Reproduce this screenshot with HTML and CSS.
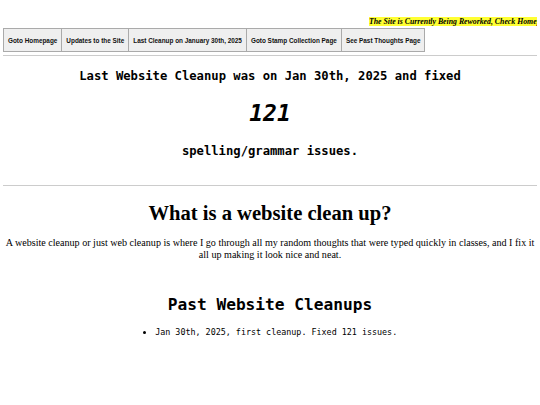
FILE: index.html
```html
<!DOCTYPE html>
<html>
<head>
<meta charset="utf-8">
<link rel="stylesheet" href="styles.css">
</head>
<body>
<div class="notice"><span class="notice-text">The Site is Currently Being Reworked, Check Homepage for Updates</span></div>
<nav class="nav">
  <button class="nav-btn">Goto Homepage</button>
  <button class="nav-btn">Updates to the Site</button>
  <button class="nav-btn">Last Cleanup on January 30th, 2025</button>
  <button class="nav-btn">Goto Stamp Collection Page</button>
  <button class="nav-btn">See Past Thoughts Page</button>
</nav>
<hr class="rule rule-top">
<section class="summary">
  <p class="mono-line">Last Website Cleanup was on Jan 30th, 2025 and fixed</p>
  <p class="count">121</p>
  <p class="mono-line">spelling/grammar issues.</p>
</section>
<hr class="rule">
<h1 class="title">What is a website clean up?</h1>
<p class="desc">A website cleanup or just web cleanup is where I go through all my random thoughts that were typed quickly in classes, and I fix it all up making it look nice and neat.</p>
<h2 class="past-title">Past Website Cleanups</h2>
<ul class="past-list">
  <li>Jan 30th, 2025, first cleanup. Fixed 121 issues.</li>
</ul>
</body>
</html>
```
FILE: styles.css
```css
html, body {
  margin: 0;
  padding: 0;
  background: #fff;
  color: #000;
}
body {
  padding: 0 3px;
  font-family: "Liberation Serif", serif;
}
.notice {
  height: 28px;
  overflow: hidden;
  white-space: nowrap;
  padding-left: 366px;
  box-sizing: border-box;
  padding-top: 10px;
}
.notice-text {
  font-family: "Liberation Serif", serif;
  font-weight: bold;
  font-style: italic;
  font-size: 7.8px;
  background: #ffff33;
}
.nav {
  display: flex;
  height: 24px;
}
.nav-btn {
  font-family: "Liberation Sans", Arial, sans-serif;
  font-weight: bold;
  font-size: 6.4px;
  background: #efefef;
  border: 1px solid #aaa;
  margin: 0;
  margin-right: -1px;
  padding: 0 4px;
  height: 24px;
  color: #111;
}
.rule {
  border: none;
  border-top: 1px solid #ccc;
  margin: 0;
}
.rule-top {
  margin-top: 3px;
}
.summary {
  text-align: center;
  font-family: "DejaVu Sans Mono", monospace;
  padding: 12px 0 26px;
}
.mono-line {
  margin: 0;
  font-size: 12.2px;
  font-weight: bold;
  line-height: 16px;
}
.count {
  margin: 14px 0 15px;
  font-size: 23px;
  font-weight: bold;
  font-style: italic;
  line-height: 30px;
}
.title {
  text-align: center;
  font-family: "Liberation Serif", serif;
  font-size: 20.6px;
  margin: 14px 0 11px;
  line-height: 26px;
}
.desc {
  text-align: center;
  font-size: 10.1px;
  line-height: 12px;
  margin: 0;
}
.past-title {
  text-align: center;
  font-family: "DejaVu Sans Mono", monospace;
  font-size: 16.2px;
  font-weight: bold;
  margin: 34px 0 12px;
  line-height: 20px;
}
.past-list {
  font-family: "DejaVu Sans Mono", monospace;
  font-size: 8.4px;
  list-style-position: inside;
  text-align: center;
  margin: 0;
  padding: 0;
}
```
